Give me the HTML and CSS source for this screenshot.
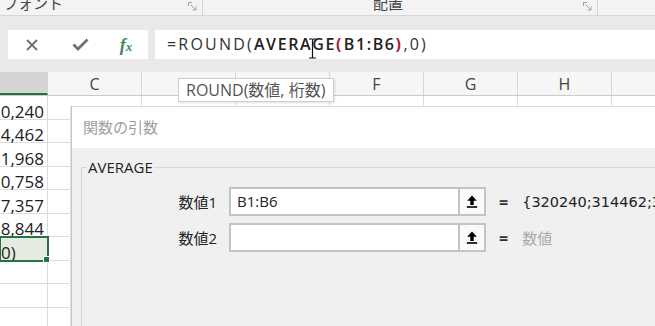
FILE: index.html
```html
<!DOCTYPE html>
<html lang="ja">
<head>
    <meta charset="UTF-8">
    <title>関数の引数</title>
    <link rel="stylesheet" href="styles.css">
</head>
<body>
    <div class="ribbon">
        <div class="rgroup font-group">
            <span class="rlabel">フォント</span>
            <svg class="launcher" width="9" height="9" viewBox="0 0 9 9"><path d="M0.5 4V0.5H4M2.5 2.5L8 8M8 4.5V8H4.5" fill="none" stroke="#a3a3a3" stroke-width="1"/></svg>
        </div>
        <div class="rgroup align-group">
            <span class="rlabel">配置</span>
            <svg class="launcher" width="9" height="9" viewBox="0 0 9 9"><path d="M0.5 4V0.5H4M2.5 2.5L8 8M8 4.5V8H4.5" fill="none" stroke="#a3a3a3" stroke-width="1"/></svg>
        </div>
    </div>

    <div class="formula-bar">
        <div class="fx-box">
            <span class="slot"><svg width="12" height="12" viewBox="0 0 12 12"><path d="M1 1L11 11M11 1L1 11" stroke="#6f6f6f" stroke-width="1.8"/></svg></span>
            <span class="slot"><svg width="17" height="13" viewBox="0 0 17 13"><path d="M1.5 6.5L6 11L15.5 1.5" fill="none" stroke="#707070" stroke-width="2.8"/></svg></span>
            <span class="slot fx"><i>f</i><i class="x">x</i></span>
        </div>
        <div class="formula-input">=ROUND(<b>AVERAGE</b><b class="paren">(</b><b>B1:B6</b><b class="paren">)</b>,0)<svg class="ibeam" width="9" height="21" viewBox="0 0 9 21"><path d="M1 1H3.5Q4.5 1 4.5 2V19Q4.5 20 3.5 20H1M8 1H5.5Q4.5 1 4.5 2M4.5 19Q4.5 20 5.5 20H8" fill="none" stroke="#111" stroke-width="1.2"/></svg></div>
    </div>

    <div class="sheet">
        <div class="col-head">
            <div class="h sel"></div>
            <div class="h">C</div>
            <div class="h"></div>
            <div class="h"></div>
            <div class="h">F</div>
            <div class="h">G</div>
            <div class="h">H</div>
            <div class="h"></div>
        </div>
        <div class="row"><div class="c b">0,240</div><div class="c"></div><div class="c"></div><div class="c"></div><div class="c"></div><div class="c"></div><div class="c"></div><div class="c"></div></div>
        <div class="row"><div class="c b">4,462</div><div class="c"></div><div class="c"></div><div class="c"></div><div class="c"></div><div class="c"></div><div class="c"></div><div class="c"></div></div>
        <div class="row"><div class="c b">1,968</div><div class="c"></div><div class="c"></div><div class="c"></div><div class="c"></div><div class="c"></div><div class="c"></div><div class="c"></div></div>
        <div class="row"><div class="c b">0,758</div><div class="c"></div><div class="c"></div><div class="c"></div><div class="c"></div><div class="c"></div><div class="c"></div><div class="c"></div></div>
        <div class="row"><div class="c b">7,357</div><div class="c"></div><div class="c"></div><div class="c"></div><div class="c"></div><div class="c"></div><div class="c"></div><div class="c"></div></div>
        <div class="row"><div class="c b">8,844</div><div class="c"></div><div class="c"></div><div class="c"></div><div class="c"></div><div class="c"></div><div class="c"></div><div class="c"></div></div>
        <div class="row"><div class="c b active">0)</div><div class="c"></div><div class="c"></div><div class="c"></div><div class="c"></div><div class="c"></div><div class="c"></div><div class="c"></div></div>
        <div class="row"><div class="c b"></div><div class="c"></div><div class="c"></div><div class="c"></div><div class="c"></div><div class="c"></div><div class="c"></div><div class="c"></div></div>
        <div class="row"><div class="c b"></div><div class="c"></div><div class="c"></div><div class="c"></div><div class="c"></div><div class="c"></div><div class="c"></div><div class="c"></div></div>
        <div class="row"><div class="c b"></div><div class="c"></div><div class="c"></div><div class="c"></div><div class="c"></div><div class="c"></div><div class="c"></div><div class="c"></div></div>

        <div class="tooltip">ROUND(数値, 桁数)</div>

        <div class="dialog">
            <div class="dlg-title">関数の引数</div>
            <div class="dlg-body">
                <fieldset class="group">
                    <legend>AVERAGE</legend>
                    <div class="arg">
                        <span class="arg-label">数値1</span>
                        <span class="arg-input">B1:B6</span>
                        <span class="arg-btn"><svg width="12" height="13" viewBox="0 0 12 13"><path d="M6 0.5L1.2 5.8H4.3V10H7.7V5.8H10.8Z" fill="#000"/><path d="M0.8 12H11.2" stroke="#000" stroke-width="1.6"/></svg></span>
                        <span class="eq">=</span>
                        <span class="arg-val">{320240;314462;301968;300758;297357;298844}</span>
                    </div>
                    <div class="arg">
                        <span class="arg-label">数値2</span>
                        <span class="arg-input"></span>
                        <span class="arg-btn"><svg width="12" height="13" viewBox="0 0 12 13"><path d="M6 0.5L1.2 5.8H4.3V10H7.7V5.8H10.8Z" fill="#000"/><path d="M0.8 12H11.2" stroke="#000" stroke-width="1.6"/></svg></span>
                        <span class="eq">=</span>
                        <span class="arg-val hint">数値</span>
                    </div>
                </fieldset>
            </div>
        </div>
    </div>
</body>
</html>
```

FILE: styles.css
```css
body {
    margin: 0;
    width: 655px;
    height: 326px;
    overflow: hidden;
    font-family: "Open Sans", "Noto Sans CJK JP", sans-serif;
    color: #222;
    background: #fff;
}

/* ribbon strip, cut off at the top */
.ribbon {
    height: 15px;
    display: flex;
    overflow: hidden;
    background: #f3f3f3;
    border-bottom: 1px solid #d6d6d6;
}
.rgroup {
    display: flex;
    align-items: flex-start;
    flex: none;
    border-right: 1px solid #d3d3d3;
    box-sizing: border-box;
}
.font-group {
    width: 203px;
}
.align-group {
    width: 395px;
}
.rlabel {
    font-size: 15px;
    line-height: 15px;
    margin-top: -4px;
    color: #444;
}
.font-group .rlabel {
    margin-left: 3px;
}
.align-group .rlabel {
    margin-left: 170px;
}
.launcher {
    margin-left: auto;
    margin-right: 5px;
    margin-top: 2px;
}

/* formula bar */
.formula-bar {
    height: 56px;
    box-sizing: border-box;
    padding: 14px 0 0 8px;
    display: flex;
    gap: 7px;
    background: #e9e9e9;
}
.fx-box {
    width: 140px;
    height: 29px;
    flex: none;
    display: grid;
    grid-template-columns: 48px 48px 44px;
    align-items: center;
    background: #fff;
}
.slot {
    display: flex;
    justify-content: center;
    align-items: center;
}
.fx {
    font-family: "Liberation Serif", serif;
    font-weight: bold;
    color: #3b8a5c;
    font-size: 18px;
    line-height: 20px;
}
.fx .x {
    font-size: 13px;
    margin-top: 5px;
}
.formula-input {
    flex: 1;
    height: 29px;
    position: relative;
    padding-left: 12px;
    background: #fff;
    font-size: 16px;
    line-height: 29px;
    letter-spacing: 2.2px;
    color: #333;
    white-space: nowrap;
}
.formula-input b {
    color: #222;
    font-weight: 600;
    letter-spacing: 1.6px;
}
.formula-input .paren {
    color: #a4203c;
    font-weight: bold;
    letter-spacing: 2.4px;
}
.ibeam {
    position: absolute;
    left: 153px;
    top: 8px;
}

/* sheet */
.sheet {
    position: relative;
    height: 254px;
    overflow: hidden;
}
.col-head {
    display: flex;
    height: 23px;
    background: #f6f6f6;
    border-bottom: 1px solid #cbcbcb;
}
.h {
    width: 94px;
    flex: none;
    box-sizing: border-box;
    border-right: 1px solid #d6d6d6;
    text-align: center;
    font-size: 16px;
    line-height: 25px;
    color: #444;
}
.h.sel {
    width: 48px;
    background: #d4d4d4;
    border-bottom: 2px solid #217346;
}
.row {
    display: flex;
    height: 23.5px;
}
.c {
    width: 94px;
    flex: none;
    box-sizing: border-box;
    border-right: 1px solid #dcdcdc;
    border-bottom: 1px solid #dcdcdc;
}
.c.b {
    width: 48px;
    display: flex;
    justify-content: flex-end;
    align-items: flex-end;
    padding-right: 3px;
    font-size: 17px;
    line-height: 14px;
    color: #222;
}
.c.active {
    position: relative;
    justify-content: flex-start;
    padding-left: 1px;
    background: #e5ebde;
    outline: 2px solid #217346;
    outline-offset: -1px;
}
.c.active::after {
    content: "";
    position: absolute;
    right: -3px;
    bottom: -3px;
    width: 5px;
    height: 5px;
    background: #217346;
    border: 1px solid #fff;
}

/* tooltip over the headers */
.tooltip {
    position: absolute;
    left: 178px;
    top: 6px;
    height: 22px;
    padding: 0 8px 0 7px;
    background: #fff;
    border: 1px solid #cfcfcf;
    box-shadow: 1px 1px 2px rgba(0,0,0,0.12);
    font-size: 16px;
    line-height: 22px;
    color: #555;
    white-space: nowrap;
}

/* function arguments dialog */
.dialog {
    position: absolute;
    left: 71px;
    top: 34px;
    right: -40px;
    bottom: -40px;
    background: #f0f0f0;
    border-left: 1px solid #c4c4c4;
    border-top: 1px solid #dadada;
    box-shadow: -1px 0 0 #e4e4e4;
}
.dlg-title {
    height: 41px;
    padding-left: 11px;
    background: #fff;
    font-size: 15px;
    line-height: 41px;
    color: #9d9d9d;
}
.dlg-body {
    padding: 9px 0 0 9px;
}
.group {
    margin: 0;
    padding: 10px 0 0 0;
    border: none;
    border-top: 1px solid #d6d6d6;
    border-left: 1px solid #d6d6d6;
    min-height: 200px;
}
.group legend {
    margin-left: 4px;
    padding: 0 2px;
    font-size: 15px;
    line-height: 20px;
    color: #222;
}
.arg {
    display: flex;
    align-items: center;
    height: 29px;
    margin-bottom: 7px;
    white-space: nowrap;
}
.arg-label {
    width: 135px;
    flex: none;
    text-align: right;
    margin-right: 12px;
    font-size: 15px;
    color: #222;
}
.arg-input {
    width: 229px;
    height: 29px;
    flex: none;
    box-sizing: border-box;
    padding-left: 6px;
    background: #fff;
    border: 2px solid #c4c4c4;
    border-right: none;
    font-size: 15px;
    line-height: 25px;
    color: #222;
}
.arg-btn {
    width: 28px;
    height: 29px;
    flex: none;
    box-sizing: border-box;
    display: flex;
    align-items: center;
    justify-content: center;
    background: #fafafa;
    border: 2px solid #c4c4c4;
}
.eq {
    margin-left: 13px;
    font-size: 16px;
    font-weight: bold;
    color: #333;
}
.arg-val {
    margin-left: 14px;
    font-family: "DejaVu Sans", "Noto Sans CJK JP", sans-serif;
    font-size: 14.5px;
    color: #222;
}
.arg-val.hint {
    font-family: "Noto Sans CJK JP", sans-serif;
    font-size: 15px;
    color: #a9a9a9;
}
```
